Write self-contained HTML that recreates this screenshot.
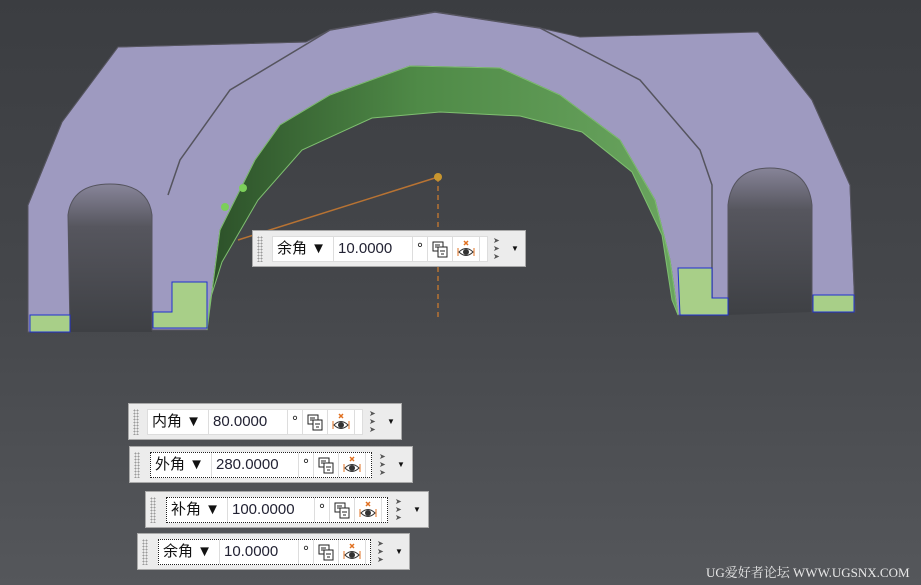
<!DOCTYPE html>
<html><head><meta charset="utf-8"><style>
body{margin:0;width:921px;height:585px;overflow:hidden;background:linear-gradient(#3b3d41,#45474b 50%,#55575b);position:relative;font-family:"Liberation Sans","Noto Sans CJK SC",sans-serif}
.tb{position:absolute;background:#ececec;border:1px solid #a9a9a9;box-sizing:border-box;height:37px}
.grip{position:absolute;left:4px;top:5px;width:6px;height:26px;background-image:radial-gradient(#9a9a9a 45%,transparent 50%);background-size:3px 3px}
.in{position:absolute;top:5px;height:26px;background:#fff;border:1px solid #ddd;box-sizing:border-box;display:flex;font-size:15px;line-height:24px;color:#111}
.in.d{border:1px dotted #222}
.in>div{border-right:1px solid #ddd;padding:0 4px;white-space:nowrap}
.in svg{display:block;margin-top:3px}
.v{color:#223}
.ar{position:absolute;top:6px;font-size:8px;line-height:8px;color:#555}
.dd{position:absolute;top:13px;font-size:8px;color:#111}
</style></head><body>
<svg width="0" height="0" style="position:absolute"><defs>
<g id="pi"><rect x="1" y="2" width="10" height="9" fill="#fff" stroke="#222"/><rect x="6" y="7" width="9" height="10" fill="#fff" stroke="#222"/><path d="M3,5h5M3,7h3M8,11h5M9,14h3" stroke="#222"/></g>
<g id="ei"><path d="M7,1l4,4M11,1l-4,4" stroke="#e07020" stroke-width="1.5"/><path d="M1,8v8M17,8v8" stroke="#e07020"/><path d="M2,12q7,-7 14,0q-7,7 -14,0z" fill="#fff" stroke="#333"/><circle cx="9" cy="12" r="3" fill="#333"/></g>
</defs></svg>
<svg width="921" height="585" style="position:absolute;left:0;top:0">
<defs>
<linearGradient id="g" x1="0" x2="1"><stop offset="0" stop-color="#2c5029"/><stop offset=".45" stop-color="#4f8a47"/><stop offset="1" stop-color="#6aa55f"/></linearGradient>
<linearGradient id="h" x1="0" y1="0" x2="0" y2="1"><stop offset="0" stop-color="#8a879c"/><stop offset=".3" stop-color="#56565e"/><stop offset="1" stop-color="#3e4044"/></linearGradient>
</defs>
<path d="M68,332 L68,215 Q70,182 110,182 Q150,182 152,215 L152,332Z" fill="url(#h)"/>
<path d="M728,315 L728,200 Q732,165 770,165 Q810,165 812,200 L812,312Z" fill="url(#h)"/>
<path d="M28,332 L28,205 L62,122 L118,47 L306,42 L330,30 L435,12 L540,28 L580,37 L758,32 L812,100 L850,185 L855,312 L812,312 L812,205 Q808,168 770,168 Q732,168 728,205 L728,315 L678,315 L670,260 L655,200 L620,140 L560,95 L500,68 L410,66 L330,95 L280,125 L255,160 L220,230 L207,330 L152,330 L152,215 Q148,184 110,184 Q72,184 68,215 L70,332Z" fill="#9e9ac0" stroke="#55545e" stroke-width="1"/>
<polyline points="168,195 180,160 230,90 330,30 435,12 540,28 640,80 700,150 712,185 712,300" fill="none" stroke="#55545e" stroke-width="1.5"/>
<polyline points="28,205 62,122 118,47 306,42" fill="none" stroke="#55545e"/>
<polyline points="758,32 812,100 850,185 855,312" fill="none" stroke="#55545e"/>
<path d="M207,330 L220,230 L255,160 L280,125 L330,95 L410,66 L500,68 L560,95 L620,140 L655,200 L670,260 L678,315 L672,300 L662,235 L632,172 L582,132 L520,116 L440,112 L372,118 L302,150 L258,200 L222,262 L210,300Z" fill="url(#g)" stroke="#7fbf70" stroke-width="1"/>
<rect x="30" y="315" width="40" height="17" fill="#a8cf88" stroke="#2030d0"/>
<path d="M172,282 L207,282 L207,328 L153,328 L153,312 L172,312Z" fill="#a8cf88" stroke="#2030d0"/>
<path d="M678,268 L712,268 L712,298 L728,298 L728,315 L680,315Z" fill="#a8cf88" stroke="#2030d0"/>
<rect x="813" y="295" width="41" height="17" fill="#a8cf88" stroke="#2030d0"/>
<line x1="238" y1="240" x2="438" y2="177" stroke="#b87333" stroke-width="1.5"/>
<line x1="438" y1="177" x2="438" y2="318" stroke="#b87333" stroke-width="1.5" stroke-dasharray="5,4"/>
<circle cx="438" cy="177" r="4" fill="#c8962f"/>
<circle cx="243" cy="188" r="4" fill="#7ccf5a"/><circle cx="225" cy="207" r="4" fill="#7ccf5a"/>
</svg>

<div class="tb" style="left:252px;top:230px;width:274px"><div class="grip"></div>
<div class="in" style="left:19px;width:216px"><div style="width:52px">余角 ▼</div><div class="v" style="width:70px">10.0000</div><div>°</div><div><svg width="16" height="18"><use href="#pi"/></svg></div><div><svg width="18" height="18"><use href="#ei"/></svg></div></div>
<div class="ar" style="left:240px">➤<br>➤<br>➤</div><div class="dd" style="left:258px">▼</div></div>

<div class="tb" style="left:128px;top:403px;width:274px"><div class="grip"></div>
<div class="in" style="left:18px;width:216px"><div style="width:52px">内角 ▼</div><div class="v" style="width:70px">80.0000</div><div>°</div><div><svg width="16" height="18"><use href="#pi"/></svg></div><div><svg width="18" height="18"><use href="#ei"/></svg></div></div>
<div class="ar" style="left:240px">➤<br>➤<br>➤</div><div class="dd" style="left:258px">▼</div></div>

<div class="tb" style="left:129px;top:446px;width:284px"><div class="grip"></div>
<div class="in d" style="left:20px;width:222px"><div style="width:52px">外角 ▼</div><div class="v" style="width:78px">280.0000</div><div>°</div><div><svg width="16" height="18"><use href="#pi"/></svg></div><div><svg width="18" height="18"><use href="#ei"/></svg></div></div>
<div class="ar" style="left:249px">➤<br>➤<br>➤</div><div class="dd" style="left:267px">▼</div></div>

<div class="tb" style="left:145px;top:491px;width:284px"><div class="grip"></div>
<div class="in d" style="left:20px;width:222px"><div style="width:52px">补角 ▼</div><div class="v" style="width:78px">100.0000</div><div>°</div><div><svg width="16" height="18"><use href="#pi"/></svg></div><div><svg width="18" height="18"><use href="#ei"/></svg></div></div>
<div class="ar" style="left:249px">➤<br>➤<br>➤</div><div class="dd" style="left:267px">▼</div></div>

<div class="tb" style="left:137px;top:533px;width:273px"><div class="grip"></div>
<div class="in d" style="left:20px;width:213px"><div style="width:52px">余角 ▼</div><div class="v" style="width:70px">10.0000</div><div>°</div><div><svg width="16" height="18"><use href="#pi"/></svg></div><div><svg width="18" height="18"><use href="#ei"/></svg></div></div>
<div class="ar" style="left:239px">➤<br>➤<br>➤</div><div class="dd" style="left:257px">▼</div></div>

<div style="position:absolute;left:706px;top:562px;font-family:'Liberation Serif','Noto Serif CJK SC',serif;font-size:13px;color:#e8e8e8;white-space:nowrap">UG爱好者论坛 WWW.UGSNX.COM</div>
</body></html>
